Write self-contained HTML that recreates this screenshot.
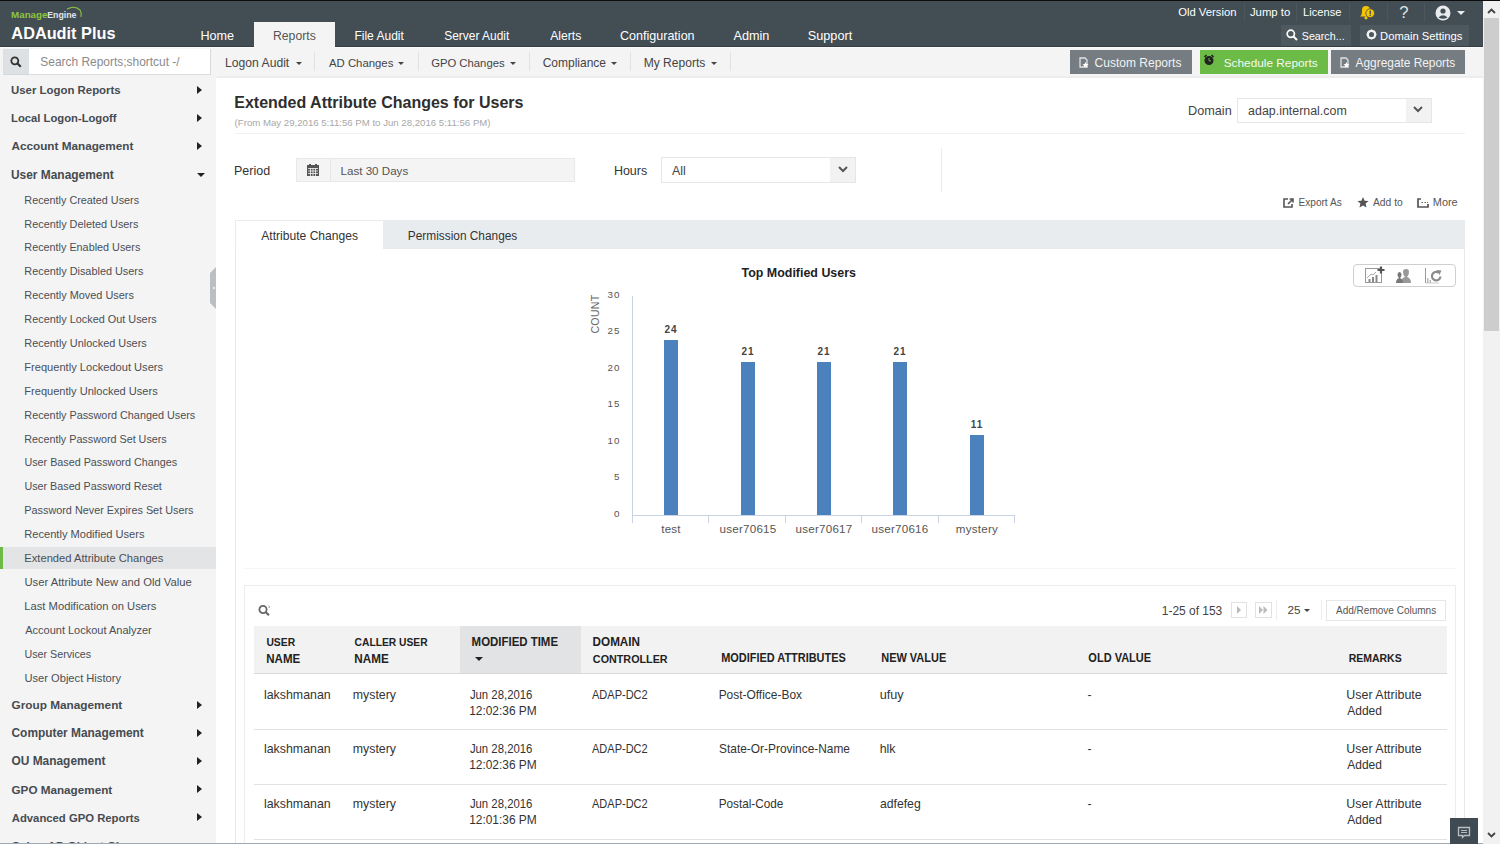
<!DOCTYPE html>
<html><head><meta charset="utf-8">
<style>
*{margin:0;padding:0;box-sizing:border-box}
html,body{width:1500px;height:844px;overflow:hidden;background:#fff;font-family:"Liberation Sans",sans-serif;color:#333}
.a{position:absolute;white-space:nowrap;line-height:1}
svg.a{overflow:visible}
</style></head><body>
<div class="a" style="left:0px;top:0px;width:1500px;height:1px;background:#0d0d0d"></div>
<div class="a" style="left:0px;top:1px;width:1483px;height:46px;background:#424d54"></div>
<div class="a" style="left:11.11px;top:10.00px;font-size:9.76px;font-weight:bold;color:#8dc63f;">Manage</div>
<div class="a" style="left:47.27px;top:11.00px;font-size:8.78px;font-weight:bold;color:#e3e6e8;">Engine</div>
<svg class="a" style="left:62px;top:5px" width="22" height="14" viewBox="0 0 22 14"><path d="M5 4 Q13 0 18 5 Q20 8 19 12" stroke="#8dc63f" stroke-width="1.1" fill="none"/></svg>
<div class="a" style="left:11.37px;top:25.00px;font-size:16.31px;font-weight:bold;color:#fff;">ADAudit Plus</div>
<div class="a" style="left:254px;top:22px;width:81px;height:25px;background:#f4f4f4"></div>
<div class="a" style="left:200.39px;top:30.00px;font-size:12.62px;font-weight:normal;color:#fff;">Home</div>
<div class="a" style="left:354.44px;top:30.00px;font-size:12.03px;font-weight:normal;color:#fff;">File Audit</div>
<div class="a" style="left:444.22px;top:31.00px;font-size:11.95px;font-weight:normal;color:#fff;">Server Audit</div>
<div class="a" style="left:550.20px;top:30.00px;font-size:12.19px;font-weight:normal;color:#fff;">Alerts</div>
<div class="a" style="left:619.97px;top:30.00px;font-size:12.56px;font-weight:normal;color:#fff;">Configuration</div>
<div class="a" style="left:733.50px;top:30.00px;font-size:12.67px;font-weight:normal;color:#fff;">Admin</div>
<div class="a" style="left:807.79px;top:30.00px;font-size:12.7px;font-weight:normal;color:#fff;">Support</div>
<div class="a" style="left:273.02px;top:30.00px;font-size:12.21px;font-weight:normal;color:#555;">Reports</div>
<div class="a" style="left:1178.15px;top:7.00px;font-size:11.31px;font-weight:normal;color:#fff;">Old Version</div>
<div class="a" style="left:1249.89px;top:7.00px;font-size:11.39px;font-weight:normal;color:#fff;">Jump to</div>
<div class="a" style="left:1303.11px;top:7.00px;font-size:11.11px;font-weight:normal;color:#fff;">License</div>
<div class="a" style="left:1244px;top:3px;width:1px;height:19px;background:#4b565d"></div>
<div class="a" style="left:1296px;top:3px;width:1px;height:19px;background:#4b565d"></div>
<div class="a" style="left:1349px;top:3px;width:1px;height:19px;background:#4b565d"></div>
<div class="a" style="left:1387px;top:3px;width:1px;height:19px;background:#4b565d"></div>
<div class="a" style="left:1424px;top:3px;width:1px;height:19px;background:#4b565d"></div>
<svg class="a" style="left:1359px;top:5px" width="17" height="15" viewBox="0 0 17 15"><path d="M1 11.5 Q3 10 3 7 L3 5 Q3 1 7 1 Q11 1 11 5 L11 7 Q11 10 13 11.5 Z" fill="#f5c400"/><circle cx="7" cy="12.8" r="1.6" fill="#f5c400"/><circle cx="11.2" cy="8.2" r="4.4" fill="#f5c400" stroke="#424d54" stroke-width="0.8"/><rect x="10.6" y="5.6" width="1.3" height="3.4" fill="#424d54"/><rect x="10.6" y="9.7" width="1.3" height="1.3" fill="#424d54"/></svg>
<div class="a" style="left:1399.33px;top:5.00px;font-size:16.67px;font-weight:normal;color:#dfe3e6;">?</div>
<svg class="a" style="left:1435px;top:5px" width="16" height="16" viewBox="0 0 16 16"><circle cx="8" cy="8" r="7.5" fill="#e9ecee"/><circle cx="8" cy="6" r="2.6" fill="#424d54"/><path d="M3.5 12.5 Q8 8 12.5 12.5 Q8 15 3.5 12.5Z" fill="#424d54"/></svg>
<svg class="a" style="left:1457px;top:11px" width="8" height="4" viewBox="0 0 8 4"><path d="M0 0H8L4 4Z" fill="#e9ecee"/></svg>
<div class="a" style="left:1281px;top:25px;width:70px;height:22px;background:#4e595f"></div>
<svg class="a" style="left:1286px;top:29px" width="12" height="12" viewBox="0 0 12 12"><circle cx="4.8" cy="4.8" r="3.6" stroke="#fff" stroke-width="1.7" fill="none"/><path d="M7.5 7.5 L11 11" stroke="#fff" stroke-width="2"/></svg>
<div class="a" style="left:1301.77px;top:31.00px;font-size:10.71px;font-weight:normal;color:#fff;">Search...</div>
<div class="a" style="left:1360px;top:25px;width:109px;height:22px;background:#4e595f"></div>
<svg class="a" style="left:1365px;top:28px" width="13" height="13" viewBox="0 0 13 13"><circle cx="6.5" cy="6.5" r="3.7" stroke="#f2f2f2" stroke-width="2.3" fill="none"/><path d="M6.5 1.6V2.8M6.5 10.2V11.4M1.6 6.5H2.8M10.2 6.5H11.4M3 3L3.8 3.8M9.2 9.2L10 10M3 10L3.8 9.2M9.2 3.8L10 3" stroke="#f2f2f2" stroke-width="1.1"/></svg>
<div class="a" style="left:1380.10px;top:31.00px;font-size:11.21px;font-weight:normal;color:#fff;">Domain Settings</div>
<div class="a" style="left:0px;top:47px;width:1483px;height:31px;background:#f4f4f4"></div>
<div class="a" style="left:0px;top:46px;width:254px;height:1px;background:#353e44"></div>
<div class="a" style="left:335px;top:46px;width:1148px;height:1px;background:#353e44"></div>
<div class="a" style="left:0px;top:47px;width:254px;height:1px;background:#fafafa"></div>
<div class="a" style="left:335px;top:47px;width:1148px;height:1px;background:#fafafa"></div>
<div class="a" style="left:217px;top:76px;width:1266px;height:2px;background:#ededed"></div>
<div class="a" style="left:3px;top:49px;width:26px;height:26px;background:#dde1e3;border-bottom:1px solid #d5d8da"></div>
<svg class="a" style="left:10px;top:56px" width="12" height="12" viewBox="0 0 12 12"><circle cx="4.8" cy="4.8" r="3.5" stroke="#333" stroke-width="1.8" fill="none"/><path d="M7.3 7.3 L10.8 10.8" stroke="#333" stroke-width="2.2"/></svg>
<div class="a" style="left:29px;top:49px;width:182px;height:26px;background:#fff;border-right:1px solid #d8d8d8;border-bottom:1px solid #dcdcdc"></div>
<div class="a" style="left:40.32px;top:57.00px;font-size:11.94px;font-weight:normal;color:#8a8a8a;">Search Reports;shortcut -/</div>
<div class="a" style="left:225.03px;top:57.00px;font-size:12.17px;font-weight:normal;color:#444;">Logon Audit</div>
<svg class="a" style="left:295.6px;top:62px" width="6" height="3" viewBox="0 0 8 4"><path d="M0 0H8L4 4Z" fill="#444"/></svg>
<div class="a" style="left:329.00px;top:58.00px;font-size:11.35px;font-weight:normal;color:#444;">AD Changes</div>
<svg class="a" style="left:398px;top:62px" width="6" height="3" viewBox="0 0 8 4"><path d="M0 0H8L4 4Z" fill="#444"/></svg>
<div class="a" style="left:431.13px;top:58.00px;font-size:11.3px;font-weight:normal;color:#444;">GPO Changes</div>
<svg class="a" style="left:510px;top:62px" width="6" height="3" viewBox="0 0 8 4"><path d="M0 0H8L4 4Z" fill="#444"/></svg>
<div class="a" style="left:542.70px;top:57.00px;font-size:11.99px;font-weight:normal;color:#444;">Compliance</div>
<svg class="a" style="left:611px;top:62px" width="6" height="3" viewBox="0 0 8 4"><path d="M0 0H8L4 4Z" fill="#444"/></svg>
<div class="a" style="left:643.63px;top:57.00px;font-size:12.07px;font-weight:normal;color:#444;">My Reports</div>
<svg class="a" style="left:710.5px;top:62px" width="6" height="3" viewBox="0 0 8 4"><path d="M0 0H8L4 4Z" fill="#444"/></svg>
<div class="a" style="left:314px;top:52px;width:1px;height:19px;background:#e2e2e2"></div>
<div class="a" style="left:418px;top:52px;width:1px;height:19px;background:#e2e2e2"></div>
<div class="a" style="left:529px;top:52px;width:1px;height:19px;background:#e2e2e2"></div>
<div class="a" style="left:630px;top:52px;width:1px;height:19px;background:#e2e2e2"></div>
<div class="a" style="left:730px;top:52px;width:1px;height:19px;background:#e2e2e2"></div>
<div class="a" style="left:1070px;top:50px;width:122px;height:24px;background:#767d82"></div>
<div class="a" style="left:1200px;top:50px;width:128px;height:24px;background:#6dbb47"></div>
<div class="a" style="left:1331px;top:50px;width:134px;height:24px;background:#767d82"></div>
<svg class="a" style="left:1079px;top:57px" width="10" height="11" viewBox="0 0 10 11"><path d="M1 1H6L8 3V10H1Z" fill="none" stroke="#dfe2e4" stroke-width="1.3"/><path d="M6.5 5 L7.4 7 L9.5 7.2 L8 8.6 L8.4 10.6 L6.5 9.6 L4.6 10.6 L5 8.6 L3.5 7.2 L5.6 7Z" fill="#fff"/></svg>
<div class="a" style="left:1094.60px;top:57.00px;font-size:12.02px;font-weight:normal;color:#f2f2f2;">Custom Reports</div>
<svg class="a" style="left:1203px;top:54px" width="12" height="12" viewBox="0 0 12 12"><circle cx="6" cy="6.5" r="4.5" fill="#222"/><path d="M1.5 3 L3.5 1 M10.5 3 L8.5 1" stroke="#222" stroke-width="1.6"/><path d="M6 4V6.8H8" stroke="#6dbb47" stroke-width="1"/></svg>
<div class="a" style="left:1223.73px;top:58.00px;font-size:11.84px;font-weight:normal;color:#f4f9f0;">Schedule Reports</div>
<svg class="a" style="left:1340px;top:57px" width="10" height="11" viewBox="0 0 10 11"><path d="M1 1H6L8 3V10H1Z" fill="none" stroke="#dfe2e4" stroke-width="1.3"/><path d="M6.5 5 L7.4 7 L9.5 7.2 L8 8.6 L8.4 10.6 L6.5 9.6 L4.6 10.6 L5 8.6 L3.5 7.2 L5.6 7Z" fill="#fff"/></svg>
<div class="a" style="left:1355.60px;top:58.00px;font-size:11.88px;font-weight:normal;color:#f2f2f2;">Aggregate Reports</div>
<div class="a" style="left:0px;top:78px;width:216px;height:766px;background:#f4f4f4"></div>
<div class="a" style="left:11.02px;top:85.00px;font-size:11.41px;font-weight:bold;color:#454b50;">User Logon Reports</div>
<svg class="a" style="left:197px;top:85.8px" width="5" height="8" viewBox="0 0 5 8"><path d="M0 0L5 4L0 8Z" fill="#222"/></svg>
<div class="a" style="left:11.02px;top:113.00px;font-size:11.25px;font-weight:bold;color:#454b50;">Local Logon-Logoff</div>
<svg class="a" style="left:197px;top:113.8px" width="5" height="8" viewBox="0 0 5 8"><path d="M0 0L5 4L0 8Z" fill="#222"/></svg>
<div class="a" style="left:11.47px;top:140.00px;font-size:11.74px;font-weight:bold;color:#454b50;">Account Management</div>
<svg class="a" style="left:197px;top:142.0px" width="5" height="8" viewBox="0 0 5 8"><path d="M0 0L5 4L0 8Z" fill="#222"/></svg>
<div class="a" style="left:10.98px;top:170.00px;font-size:11.93px;font-weight:bold;color:#454b50;">User Management</div>
<svg class="a" style="left:197px;top:173px" width="8" height="4" viewBox="0 0 8 4"><path d="M0 0H8L4 4Z" fill="#222"/></svg>
<div class="a" style="left:24.33px;top:195.00px;font-size:10.82px;font-weight:normal;color:#4a4f54;">Recently Created Users</div>
<div class="a" style="left:24.33px;top:219.00px;font-size:10.87px;font-weight:normal;color:#4a4f54;">Recently Deleted Users</div>
<div class="a" style="left:24.33px;top:242.00px;font-size:10.82px;font-weight:normal;color:#4a4f54;">Recently Enabled Users</div>
<div class="a" style="left:24.33px;top:266.00px;font-size:10.88px;font-weight:normal;color:#4a4f54;">Recently Disabled Users</div>
<div class="a" style="left:24.33px;top:290.00px;font-size:10.9px;font-weight:normal;color:#4a4f54;">Recently Moved Users</div>
<div class="a" style="left:24.33px;top:314.00px;font-size:10.88px;font-weight:normal;color:#4a4f54;">Recently Locked Out Users</div>
<div class="a" style="left:24.33px;top:338.00px;font-size:10.91px;font-weight:normal;color:#4a4f54;">Recently Unlocked Users</div>
<div class="a" style="left:24.31px;top:362.00px;font-size:11.1px;font-weight:normal;color:#4a4f54;">Frequently Lockedout Users</div>
<div class="a" style="left:24.31px;top:386.00px;font-size:11.07px;font-weight:normal;color:#4a4f54;">Frequently Unlocked Users</div>
<div class="a" style="left:24.33px;top:410.00px;font-size:10.84px;font-weight:normal;color:#4a4f54;">Recently Password Changed Users</div>
<div class="a" style="left:24.34px;top:434.00px;font-size:10.78px;font-weight:normal;color:#4a4f54;">Recently Password Set Users</div>
<div class="a" style="left:24.45px;top:457.00px;font-size:10.78px;font-weight:normal;color:#4a4f54;">User Based Password Changes</div>
<div class="a" style="left:24.45px;top:481.00px;font-size:10.76px;font-weight:normal;color:#4a4f54;">User Based Password Reset</div>
<div class="a" style="left:24.33px;top:505.00px;font-size:10.84px;font-weight:normal;color:#4a4f54;">Password Never Expires Set Users</div>
<div class="a" style="left:24.31px;top:529.00px;font-size:11.1px;font-weight:normal;color:#4a4f54;">Recently Modified Users</div>
<div class="a" style="left:0px;top:547px;width:216px;height:22px;background:#e3e4e6"></div>
<div class="a" style="left:0px;top:547px;width:3px;height:22px;background:#6dbb47"></div>
<div class="a" style="left:24.31px;top:553.00px;font-size:11.18px;font-weight:normal;color:#4a4f54;">Extended Attribute Changes</div>
<div class="a" style="left:24.41px;top:577.00px;font-size:11.26px;font-weight:normal;color:#4a4f54;">User Attribute New and Old Value</div>
<div class="a" style="left:24.30px;top:601.00px;font-size:11.21px;font-weight:normal;color:#4a4f54;">Last Modification on Users</div>
<div class="a" style="left:25.20px;top:625.00px;font-size:11.01px;font-weight:normal;color:#4a4f54;">Account Lockout Analyzer</div>
<div class="a" style="left:24.45px;top:649.00px;font-size:10.73px;font-weight:normal;color:#4a4f54;">User Services</div>
<div class="a" style="left:24.42px;top:673.00px;font-size:11.15px;font-weight:normal;color:#4a4f54;">User Object History</div>
<div class="a" style="left:11.53px;top:700.00px;font-size:11.81px;font-weight:bold;color:#454b50;">Group Management</div>
<svg class="a" style="left:197px;top:700.5px" width="5" height="8" viewBox="0 0 5 8"><path d="M0 0L5 4L0 8Z" fill="#222"/></svg>
<div class="a" style="left:11.52px;top:728.00px;font-size:11.91px;font-weight:bold;color:#454b50;">Computer Management</div>
<svg class="a" style="left:197px;top:728.7px" width="5" height="8" viewBox="0 0 5 8"><path d="M0 0L5 4L0 8Z" fill="#222"/></svg>
<div class="a" style="left:11.52px;top:756.00px;font-size:11.92px;font-weight:bold;color:#454b50;">OU Management</div>
<svg class="a" style="left:197px;top:756.9px" width="5" height="8" viewBox="0 0 5 8"><path d="M0 0L5 4L0 8Z" fill="#222"/></svg>
<div class="a" style="left:11.53px;top:784.00px;font-size:11.7px;font-weight:bold;color:#454b50;">GPO Management</div>
<svg class="a" style="left:197px;top:785.1px" width="5" height="8" viewBox="0 0 5 8"><path d="M0 0L5 4L0 8Z" fill="#222"/></svg>
<div class="a" style="left:11.77px;top:813.00px;font-size:11.3px;font-weight:bold;color:#454b50;">Advanced GPO Reports</div>
<svg class="a" style="left:197px;top:813.3px" width="5" height="8" viewBox="0 0 5 8"><path d="M0 0L5 4L0 8Z" fill="#222"/></svg>
<div class="a" style="left:11.53px;top:840.00px;font-size:11.7px;font-weight:bold;color:#454b50;">Cyber AD Object Changes</div>
<svg class="a" style="left:210px;top:267px" width="6" height="42" viewBox="0 0 6 42"><path d="M6 0 V42 L0 36 V6Z" fill="#babfc3"/><path d="M4.5 19.5 L2.5 21 L4.5 22.5Z" fill="#fff"/></svg>
<div class="a" style="left:234.24px;top:95.00px;font-size:16.01px;font-weight:bold;color:#2e2e2e;">Extended Attribute Changes for Users</div>
<div class="a" style="left:234.62px;top:118.00px;font-size:9.64px;font-weight:normal;color:#a8a8a8;">(From May 29,2016 5:11:56 PM to Jun 28,2016 5:11:56 PM)</div>
<div class="a" style="left:235px;top:133px;width:1230px;height:1px;background:#f0f0f0"></div>
<div class="a" style="left:1187.98px;top:105.00px;font-size:12.69px;font-weight:normal;color:#444;">Domain</div>
<div class="a" style="left:1237px;top:98px;width:195px;height:25px;background:#fff;border:1px solid #e6e6e6"></div>
<div class="a" style="left:1406px;top:99px;width:25px;height:23px;background:#f2f2f2"></div>
<svg class="a" style="left:1413px;top:106px" width="10" height="7" viewBox="0 0 10 7"><path d="M1 1L5 5L9 1" stroke="#555" stroke-width="2" fill="none"/></svg>
<div class="a" style="left:1248.10px;top:105.00px;font-size:12.41px;font-weight:normal;color:#444;">adap.internal.com</div>
<div class="a" style="left:234.00px;top:165.00px;font-size:12.49px;font-weight:normal;color:#333;">Period</div>
<div class="a" style="left:296px;top:158px;width:279px;height:24px;background:#f4f4f4;border:1px solid #e8e8e8"></div>
<div class="a" style="left:330px;top:159px;width:1px;height:22px;background:#e6e6e6"></div>
<svg class="a" style="left:307px;top:164px" width="12" height="12" viewBox="0 0 12 12"><rect x="0" y="1" width="12" height="11" fill="#555"/><rect x="2" y="0" width="2" height="2" fill="#555"/><rect x="8" y="0" width="2" height="2" fill="#555"/><path d="M1 4.5H11M1 7H11M1 9.5H11M3.5 4V12M6 4V12M8.5 4V12" stroke="#f4f4f4" stroke-width="0.8"/></svg>
<div class="a" style="left:340.47px;top:165.00px;font-size:11.61px;font-weight:normal;color:#555;">Last 30 Days</div>
<div class="a" style="left:613.90px;top:165.00px;font-size:12.47px;font-weight:normal;color:#333;">Hours</div>
<div class="a" style="left:661px;top:157px;width:195px;height:26px;background:#fff;border:1px solid #e6e6e6"></div>
<div class="a" style="left:830px;top:158px;width:25px;height:24px;background:#f2f2f2"></div>
<svg class="a" style="left:838px;top:166px" width="10" height="7" viewBox="0 0 10 7"><path d="M1 1L5 5L9 1" stroke="#555" stroke-width="2" fill="none"/></svg>
<div class="a" style="left:672.00px;top:165.00px;font-size:12.39px;font-weight:normal;color:#444;">All</div>
<div class="a" style="left:941px;top:148px;width:1px;height:44px;background:#ececec"></div>
<svg class="a" style="left:1283px;top:198px" width="11" height="10" viewBox="0 0 11 10"><path d="M5 1H1V9H9V6" stroke="#555" stroke-width="1.6" fill="none"/><path d="M5 6L10 1M6.5 1H10V4.5" stroke="#555" stroke-width="1.6" fill="none"/></svg>
<div class="a" style="left:1298.49px;top:198.00px;font-size:10.11px;font-weight:normal;color:#555;">Export As</div>
<svg class="a" style="left:1357px;top:197px" width="12" height="11" viewBox="0 0 12 11"><path d="M6 0L7.6 3.7L11.6 4L8.6 6.6L9.5 10.6L6 8.5L2.5 10.6L3.4 6.6L0.4 4L4.4 3.7Z" fill="#555"/></svg>
<div class="a" style="left:1373.00px;top:198.00px;font-size:10.3px;font-weight:normal;color:#555;">Add to</div>
<svg class="a" style="left:1417px;top:198px" width="12" height="10" viewBox="0 0 12 10"><path d="M4 1H1V9H11V6" stroke="#555" stroke-width="1.7" fill="none"/><path d="M4.5 4.5H6M7.5 4.5H9M10 4.5H11" stroke="#666" stroke-width="1.1"/></svg>
<div class="a" style="left:1432.83px;top:197.00px;font-size:10.91px;font-weight:normal;color:#555;">More</div>
<div class="a" style="left:235px;top:220px;width:1230px;height:624px;border:1px solid #e6e8ea;background:#fff"></div>
<div class="a" style="left:235px;top:220px;width:1230px;height:29px;background:#e9ecee"></div>
<div class="a" style="left:236px;top:221px;width:147px;height:29px;background:#fff"></div>
<div class="a" style="left:261.30px;top:230.00px;font-size:12.09px;font-weight:normal;color:#333;">Attribute Changes</div>
<div class="a" style="left:407.85px;top:231.00px;font-size:11.87px;font-weight:normal;color:#333;">Permission Changes</div>
<div class="a" style="left:741.58px;top:267.00px;font-size:12.43px;font-weight:bold;color:#222;">Top Modified Users</div>
<div class="a" style="left:1353px;top:264px;width:103px;height:23px;border:1px solid #cfcfcf;border-radius:4px"></div>
<svg class="a" style="left:1353px;top:264px" width="103" height="23" viewBox="0 0 103 23">
<rect x="12.5" y="4.5" width="16" height="14" fill="none" stroke="#999" stroke-width="1"/>
<path d="M14 14L18 10L20 11L23 8" stroke="#aaa" stroke-width="1" fill="none"/>
<rect x="19" y="13" width="2" height="5" fill="#888"/><rect x="22.5" y="11" width="2" height="7" fill="#888"/><rect x="15.5" y="15" width="2" height="3" fill="#888"/>
<path d="M28 2.5V9.5M24.5 6H31.5" stroke="#555" stroke-width="2.2"/>
<path d="M48 19 Q48 14 52 13 Q50 11 50 8 Q50 5 53 5 Q56 5 56 8 Q56 11 54 13 Q58 14 58 19Z" fill="#999"/>
<path d="M43 19 Q43 15 46 14 Q44.5 12.5 44.5 10.5 Q44.5 8 46.5 8 Q48.5 8 48.5 10.5 Q48.5 12.5 47 14 Q50 15 50 19Z" fill="#777"/>
<path d="M72.5 4V19" stroke="#999" stroke-width="1" fill="none"/><path d="M73 19H86" stroke="#ccc" stroke-width="1" fill="none"/>
<path d="M87.5 12.5 A4.3 4.3 0 1 1 85.5 8.5" stroke="#8a8a8a" stroke-width="2.2" fill="none"/>
<path d="M83.5 6L88.5 6.5L86.5 11Z" fill="#8a8a8a"/>
<rect x="74" y="14" width="1.5" height="5" fill="#bbb"/><rect x="76.5" y="16" width="1.5" height="3" fill="#bbb"/>
</svg>
<div class="a" style="left:632px;top:296px;width:1px;height:220px;background:#c8d4e4"></div>
<div class="a" style="left:632px;top:515px;width:383px;height:1px;background:#c8d4e4"></div>
<div class="a" style="left:632px;top:515px;width:1px;height:8px;background:#c8d4e4"></div>
<div class="a" style="left:708px;top:515px;width:1px;height:8px;background:#c8d4e4"></div>
<div class="a" style="left:785px;top:515px;width:1px;height:8px;background:#c8d4e4"></div>
<div class="a" style="left:861px;top:515px;width:1px;height:8px;background:#c8d4e4"></div>
<div class="a" style="left:938px;top:515px;width:1px;height:8px;background:#c8d4e4"></div>
<div class="a" style="left:1014px;top:515px;width:1px;height:8px;background:#c8d4e4"></div>
<div class="a" style="left:561px;width:59.5px;text-align:right;top:508.7px;font-size:9.8px;color:#555;letter-spacing:1px">0</div>
<div class="a" style="left:561px;width:59.5px;text-align:right;top:472.2px;font-size:9.8px;color:#555;letter-spacing:1px">5</div>
<div class="a" style="left:561px;width:59.5px;text-align:right;top:435.7px;font-size:9.8px;color:#555;letter-spacing:1px">10</div>
<div class="a" style="left:561px;width:59.5px;text-align:right;top:399.2px;font-size:9.8px;color:#555;letter-spacing:1px">15</div>
<div class="a" style="left:561px;width:59.5px;text-align:right;top:362.7px;font-size:9.8px;color:#555;letter-spacing:1px">20</div>
<div class="a" style="left:561px;width:59.5px;text-align:right;top:326.2px;font-size:9.8px;color:#555;letter-spacing:1px">25</div>
<div class="a" style="left:561px;width:59.5px;text-align:right;top:289.7px;font-size:9.8px;color:#555;letter-spacing:1px">30</div>
<div class="a" style="left:595px;top:314px;font-size:10.6px;color:#666;transform:translate(-50%,-50%) rotate(-90deg);transform-origin:center;letter-spacing:0.3px">COUNT</div>
<div class="a" style="left:664px;top:340px;width:14px;height:175px;background:#4b82be"></div>
<div class="a" style="left:634px;width:74px;text-align:center;top:325.3px;font-size:10px;font-weight:bold;color:#444;letter-spacing:1px">24</div>
<div class="a" style="left:621px;width:100px;text-align:center;top:523.2px;font-size:11.6px;color:#555;letter-spacing:0.25px">test</div>
<div class="a" style="left:741px;top:362px;width:14px;height:153px;background:#4b82be"></div>
<div class="a" style="left:711px;width:74px;text-align:center;top:347.2px;font-size:10px;font-weight:bold;color:#444;letter-spacing:1px">21</div>
<div class="a" style="left:698px;width:100px;text-align:center;top:523.2px;font-size:11.6px;color:#555;letter-spacing:0.25px">user70615</div>
<div class="a" style="left:817px;top:362px;width:14px;height:153px;background:#4b82be"></div>
<div class="a" style="left:787px;width:74px;text-align:center;top:347.2px;font-size:10px;font-weight:bold;color:#444;letter-spacing:1px">21</div>
<div class="a" style="left:774px;width:100px;text-align:center;top:523.2px;font-size:11.6px;color:#555;letter-spacing:0.25px">user70617</div>
<div class="a" style="left:893px;top:362px;width:14px;height:153px;background:#4b82be"></div>
<div class="a" style="left:863px;width:74px;text-align:center;top:347.2px;font-size:10px;font-weight:bold;color:#444;letter-spacing:1px">21</div>
<div class="a" style="left:850px;width:100px;text-align:center;top:523.2px;font-size:11.6px;color:#555;letter-spacing:0.25px">user70616</div>
<div class="a" style="left:970px;top:435px;width:14px;height:80px;background:#4b82be"></div>
<div class="a" style="left:940px;width:74px;text-align:center;top:420.2px;font-size:10px;font-weight:bold;color:#444;letter-spacing:1px">11</div>
<div class="a" style="left:927px;width:100px;text-align:center;top:523.2px;font-size:11.6px;color:#555;letter-spacing:0.25px">mystery</div>
<div class="a" style="left:244px;top:568px;width:1212px;height:1px;background:#f6f6f6"></div>
<div class="a" style="left:244px;top:585px;width:1212px;height:259px;border:1px solid #ececec;border-bottom:none"></div>
<svg class="a" style="left:258px;top:604px" width="13" height="12" viewBox="0 0 13 12"><circle cx="5" cy="5.5" r="3.6" stroke="#666" stroke-width="1.8" fill="none"/><path d="M7.8 8.3L11 11.3" stroke="#666" stroke-width="2.2"/><path d="M10.5 1.5Q12 2.5 11 4" stroke="#888" stroke-width="0.9" fill="none"/></svg>
<div class="a" style="left:1161.86px;top:606.00px;font-size:11.95px;font-weight:normal;color:#444;">1-25 of 153</div>
<div class="a" style="left:1231px;top:602px;width:16px;height:16px;background:#fff;border:1px solid #e2e2e2"></div>
<svg class="a" style="left:1237px;top:606px" width="4" height="8" viewBox="0 0 4 8"><path d="M0 0L4 4L0 8Z" fill="#bbb"/></svg>
<div class="a" style="left:1255px;top:602px;width:17px;height:16px;background:#fff;border:1px solid #e2e2e2"></div>
<svg class="a" style="left:1259px;top:606px" width="9" height="8" viewBox="0 0 9 8"><path d="M0 0L4 4L0 8Z M4.5 0L8.5 4L4.5 8Z" fill="#bbb"/></svg>
<div class="a" style="left:1276px;top:600px;width:1px;height:20px;background:#eee"></div>
<div class="a" style="left:1287.42px;top:604.00px;font-size:11.69px;font-weight:normal;color:#444;">25</div>
<svg class="a" style="left:1304px;top:609px" width="6" height="3" viewBox="0 0 8 4"><path d="M0 0H8L4 4Z" fill="#444"/></svg>
<div class="a" style="left:1321px;top:600px;width:1px;height:20px;background:#eee"></div>
<div class="a" style="left:1326px;top:600px;width:120px;height:21px;background:#fff;border:1px solid #e6e6e6"></div>
<div class="a" style="left:1336.00px;top:606.00px;font-size:10.03px;font-weight:normal;color:#555;">Add/Remove Columns</div>
<div class="a" style="left:254px;top:626px;width:1193px;height:48px;background:#f2f2f2;border-bottom:1px solid #d9d9d9"></div>
<div class="a" style="left:460px;top:626px;width:121px;height:48px;background:#e2e3e4;border-bottom:1px solid #d9d9d9"></div>
<div class="a" style="left:266.38px;top:638.00px;font-size:10.35px;font-weight:bold;color:#222;transform:scaleY(1.1);transform-origin:0 85%">USER</div>
<div class="a" style="left:266.31px;top:654.00px;font-size:11.52px;font-weight:bold;color:#222;transform:scaleY(1.1);transform-origin:0 85%">NAME</div>
<div class="a" style="left:354.59px;top:638.00px;font-size:10.27px;font-weight:bold;color:#222;transform:scaleY(1.1);transform-origin:0 85%">CALLER USER</div>
<div class="a" style="left:354.30px;top:653.00px;font-size:11.7px;font-weight:bold;color:#222;transform:scaleY(1.1);transform-origin:0 85%">NAME</div>
<div class="a" style="left:471.61px;top:637.00px;font-size:11.45px;font-weight:bold;color:#222;transform:scaleY(1.1);transform-origin:0 85%">MODIFIED TIME</div>
<svg class="a" style="left:475px;top:657px" width="8" height="4" viewBox="0 0 8 4"><path d="M0 0H8L4 4Z" fill="#222"/></svg>
<div class="a" style="left:592.60px;top:636.00px;font-size:11.7px;font-weight:bold;color:#222;transform:scaleY(1.1);transform-origin:0 85%">DOMAIN</div>
<div class="a" style="left:592.87px;top:654.00px;font-size:10.77px;font-weight:bold;color:#222;transform:scaleY(1.1);transform-origin:0 85%">CONTROLLER</div>
<div class="a" style="left:721.24px;top:653.00px;font-size:10.95px;font-weight:bold;color:#222;transform:scaleY(1.1);transform-origin:0 85%">MODIFIED ATTRIBUTES</div>
<div class="a" style="left:881.24px;top:653.00px;font-size:10.98px;font-weight:bold;color:#222;transform:scaleY(1.1);transform-origin:0 85%">NEW VALUE</div>
<div class="a" style="left:1088.36px;top:653.00px;font-size:11.0px;font-weight:bold;color:#222;transform:scaleY(1.1);transform-origin:0 85%">OLD VALUE</div>
<div class="a" style="left:1348.67px;top:654.00px;font-size:10.49px;font-weight:bold;color:#222;transform:scaleY(1.1);transform-origin:0 85%">REMARKS</div>
<div class="a" style="left:263.96px;top:689.00px;font-size:12.38px;font-weight:normal;color:#333;">lakshmanan</div>
<div class="a" style="left:352.76px;top:689.00px;font-size:12.35px;font-weight:normal;color:#333;">mystery</div>
<div class="a" style="left:469.89px;top:690.00px;font-size:11.36px;font-weight:normal;color:#333;;transform:scaleY(1.056);transform-origin:0 85%">Jun 28,2016</div>
<div class="a" style="left:469.17px;top:706.00px;font-size:11.92px;font-weight:normal;color:#333;;transform:scaleY(1.007);transform-origin:0 85%">12:02:36 PM</div>
<div class="a" style="left:592.00px;top:690.00px;font-size:11.02px;font-weight:normal;color:#333;;transform:scaleY(1.089);transform-origin:0 85%">ADAP-DC2</div>
<div class="a" style="left:718.64px;top:690.00px;font-size:11.95px;font-weight:normal;color:#333;;transform:scaleY(1.004);transform-origin:0 85%">Post-Office-Box</div>
<div class="a" style="left:879.64px;top:689.00px;font-size:12.68px;font-weight:normal;color:#333;">ufuy</div>
<div class="a" style="left:1087.52px;top:689.00px;font-size:12.0px;font-weight:normal;color:#333;">-</div>
<div class="a" style="left:1346.33px;top:689.00px;font-size:12.45px;font-weight:normal;color:#333;">User Attribute</div>
<div class="a" style="left:1347.20px;top:705.00px;font-size:12.03px;font-weight:normal;color:#333;">Added</div>
<div class="a" style="left:263.96px;top:743.00px;font-size:12.38px;font-weight:normal;color:#333;">lakshmanan</div>
<div class="a" style="left:352.76px;top:743.00px;font-size:12.35px;font-weight:normal;color:#333;">mystery</div>
<div class="a" style="left:469.89px;top:744.00px;font-size:11.36px;font-weight:normal;color:#333;;transform:scaleY(1.056);transform-origin:0 85%">Jun 28,2016</div>
<div class="a" style="left:469.17px;top:760.00px;font-size:11.92px;font-weight:normal;color:#333;;transform:scaleY(1.007);transform-origin:0 85%">12:02:36 PM</div>
<div class="a" style="left:592.00px;top:744.00px;font-size:11.02px;font-weight:normal;color:#333;;transform:scaleY(1.089);transform-origin:0 85%">ADAP-DC2</div>
<div class="a" style="left:719.12px;top:744.00px;font-size:11.9px;font-weight:normal;color:#333;;transform:scaleY(1.008);transform-origin:0 85%">State-Or-Province-Name</div>
<div class="a" style="left:879.66px;top:743.00px;font-size:12.37px;font-weight:normal;color:#333;">hlk</div>
<div class="a" style="left:1087.52px;top:743.00px;font-size:12.0px;font-weight:normal;color:#333;">-</div>
<div class="a" style="left:1346.33px;top:743.00px;font-size:12.45px;font-weight:normal;color:#333;">User Attribute</div>
<div class="a" style="left:1347.20px;top:759.00px;font-size:12.03px;font-weight:normal;color:#333;">Added</div>
<div class="a" style="left:263.96px;top:798.00px;font-size:12.38px;font-weight:normal;color:#333;">lakshmanan</div>
<div class="a" style="left:352.76px;top:798.00px;font-size:12.35px;font-weight:normal;color:#333;">mystery</div>
<div class="a" style="left:469.89px;top:799.00px;font-size:11.36px;font-weight:normal;color:#333;;transform:scaleY(1.056);transform-origin:0 85%">Jun 28,2016</div>
<div class="a" style="left:469.17px;top:815.00px;font-size:11.92px;font-weight:normal;color:#333;;transform:scaleY(1.007);transform-origin:0 85%">12:01:36 PM</div>
<div class="a" style="left:592.00px;top:799.00px;font-size:11.02px;font-weight:normal;color:#333;;transform:scaleY(1.089);transform-origin:0 85%">ADAP-DC2</div>
<div class="a" style="left:718.66px;top:798.00px;font-size:11.77px;font-weight:normal;color:#333;;transform:scaleY(1.020);transform-origin:0 85%">Postal-Code</div>
<div class="a" style="left:879.91px;top:798.00px;font-size:12.22px;font-weight:normal;color:#333;">adfefeg</div>
<div class="a" style="left:1087.52px;top:798.00px;font-size:12.0px;font-weight:normal;color:#333;">-</div>
<div class="a" style="left:1346.33px;top:798.00px;font-size:12.45px;font-weight:normal;color:#333;">User Attribute</div>
<div class="a" style="left:1347.20px;top:814.00px;font-size:12.03px;font-weight:normal;color:#333;">Added</div>
<div class="a" style="left:254px;top:729px;width:1193px;height:1px;background:#e2e2e2"></div>
<div class="a" style="left:254px;top:784px;width:1193px;height:1px;background:#e2e2e2"></div>
<div class="a" style="left:254px;top:839px;width:1193px;height:1px;background:#e2e2e2"></div>
<div class="a" style="left:0px;top:843px;width:1483px;height:1px;background:#a0a8b0"></div>
<div class="a" style="left:1450px;top:818px;width:28px;height:26px;background:#3f4a52"></div>
<svg class="a" style="left:1457px;top:826px" width="14" height="13" viewBox="0 0 14 13"><path d="M1.5 1.5H12.5V9.5H7.5L5.5 11.5V9.5H1.5Z" stroke="#b8bec2" stroke-width="1.3" fill="none"/><path d="M4 4.5H10M4 6.5H10" stroke="#b8bec2" stroke-width="1.2"/></svg>
<div class="a" style="left:1483px;top:1px;width:17px;height:843px;background:#f1f1f1"></div>
<div class="a" style="left:1484px;top:18px;width:15px;height:313px;background:#cdcdcd"></div>
<svg class="a" style="left:1487px;top:8px" width="9" height="6" viewBox="0 0 9 6"><path d="M1 5L4.5 1.5L8 5" stroke="#444" stroke-width="1.8" fill="none"/></svg>
<svg class="a" style="left:1487px;top:832px" width="9" height="6" viewBox="0 0 9 6"><path d="M1 1L4.5 4.5L8 1" stroke="#444" stroke-width="1.8" fill="none"/></svg>
</body></html>
